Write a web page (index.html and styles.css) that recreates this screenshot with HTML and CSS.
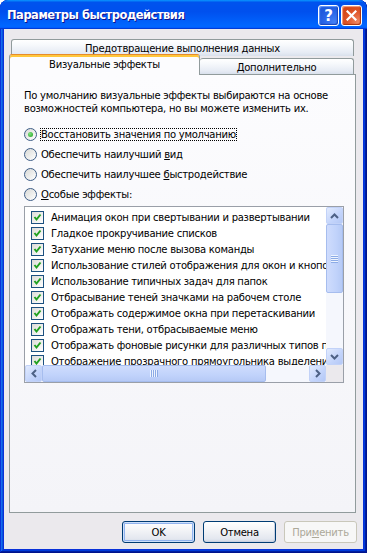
FILE: index.html
```html
<!DOCTYPE html>
<html lang="ru">
<head>
    <meta charset="UTF-8">
    <title>Параметры быстродействия</title>
    <link rel="stylesheet" href="styles.css">
</head>
<body>
    <div class="window">
        <div class="titlebar">
            <span class="title">Параметры быстродействия</span>
            <div class="caption-buttons">
                <div class="cap-btn help">?</div>
                <div class="cap-btn close">
                    <svg width="11" height="11" viewBox="0 0 11 11"><path d="M1.5 1.5 L9.5 9.5 M9.5 1.5 L1.5 9.5" stroke="#fff" stroke-width="2.2" stroke-linecap="square"/></svg>
                </div>
            </div>
        </div>
        <div class="client">
            <div class="tabs">
                <div class="tab-row back">
                    <div class="tab wide">Предотвращение выполнения данных</div>
                </div>
                <div class="tab-row front">
                    <div class="tab active">Визуальные эффекты</div>
                    <div class="tab extra">Дополнительно</div>
                </div>
            </div>
            <div class="panel">
                <p class="intro">По умолчанию визуальные эффекты выбираются на основе<br>возможностей компьютера, но вы можете изменить их.</p>
                <div class="options">
                    <div class="option"><span class="radio checked"><span class="dot"></span></span><span class="label focus">Восстановить значения по умолчанию</span></div>
                    <div class="option"><span class="radio"></span><span class="label">Обеспечить наилучший <u>в</u>ид</span></div>
                    <div class="option"><span class="radio"></span><span class="label">Обеспечить наилучшее <u>б</u>ыстродействие</span></div>
                    <div class="option"><span class="radio"></span><span class="label"><u>О</u>собые эффекты:</span></div>
                </div>
                <div class="listbox">
                    <div class="items" id="items"></div>
                    <div class="vscroll">
                        <div class="sb-btn"><svg width="9" height="6" viewBox="0 0 9 6"><path d="M1 5 L4.5 1.5 L8 5" fill="none" stroke="#4d6185" stroke-width="2"/></svg></div>
                        <div class="thumb v"><span class="grip v"></span></div>
                        <div class="track"></div>
                        <div class="sb-btn"><svg width="9" height="6" viewBox="0 0 9 6"><path d="M1 1 L4.5 4.5 L8 1" fill="none" stroke="#4d6185" stroke-width="2"/></svg></div>
                    </div>
                    <div class="hscroll">
                        <div class="sb-btn"><svg width="6" height="9" viewBox="0 0 6 9"><path d="M5 1 L1.5 4.5 L5 8" fill="none" stroke="#4d6185" stroke-width="2"/></svg></div>
                        <div class="thumb h"><span class="grip h"></span></div>
                        <div class="track"></div>
                        <div class="sb-btn"><svg width="6" height="9" viewBox="0 0 6 9"><path d="M1 1 L4.5 4.5 L1 8" fill="none" stroke="#4d6185" stroke-width="2"/></svg></div>
                    </div>
                    <div class="corner"></div>
                </div>
            </div>
            <div class="buttons">
                <button type="button" class="btn default">OK</button>
                <button type="button" class="btn">Отмена</button>
                <button type="button" class="btn" disabled>При<u>м</u>енить</button>
            </div>
        </div>
    </div>
    <script>
        const effects = [
            "Анимация окон при свертывании и развертывании",
            "Гладкое прокручивание списков",
            "Затухание меню после вызова команды",
            "Использование стилей отображения для окон и кнопок",
            "Использование типичных задач для папок",
            "Отбрасывание теней значками на рабочем столе",
            "Отображать содержимое окна при перетаскивании",
            "Отображать тени, отбрасываемые меню",
            "Отображать фоновые рисунки для различных типов папок",
            "Отображение прозрачного прямоугольника выделения"
        ];

        const list = document.getElementById("items");
        effects.forEach(text => {
            const row = document.createElement("div");
            row.className = "item";
            row.innerHTML = '<span class="check"><svg width="11" height="11" viewBox="0 0 11 11"><path d="M2.5 5 L4.5 7.5 L8.5 2.5" fill="none" stroke="#21a121" stroke-width="2"/></svg></span><span>' + text + '</span>';
            list.appendChild(row);
        });
    </script>
</body>
</html>
```

FILE: styles.css
```css
*{
    margin: 0;
    padding: 0;
    box-sizing: border-box;
}
body{
    background: #fff;
    font-family: "DejaVu Sans", sans-serif;
    font-size: 10px;
    letter-spacing: -0.25px;
    color: #000;
}

.window{
    width: 367px;
    height: 553px;
    display: flex;
    flex-direction: column;
    padding: 0 4px 4px;
    background: #0831d9;
    border-radius: 8px 8px 0 0;
    overflow: hidden;
    box-shadow: inset -1px -1px #00138c, inset 1px 1px #0831d9,
                inset -2px -2px #001ea0, inset 2px 2px #166aee,
                inset -3px -3px #003bda, inset 3px 3px #0855dd;
}
.titlebar{
    height: 29px;
    margin: 0 -4px;
    padding: 0 5px 0 7px;
    display: flex;
    align-items: center;
    justify-content: space-between;
    border-radius: 8px 8px 0 0;
    background: linear-gradient(180deg, #0997ff, #0053ee 8%, #0050ee 40%, #06f 88%, #06f 93%, #005bff 95%, #003dd7 96%, #003dd7);
}
.title{
    color: #fff;
    font-weight: bold;
    font-size: 11.5px;
    letter-spacing: -0.5px;
    text-shadow: 1px 1px #0f1089;
    padding-top: 1px;
}
.caption-buttons{
    display: flex;
    gap: 2px;
    padding-top: 2px;
}
.cap-btn{
    width: 21px;
    height: 21px;
    border: 1px solid #fff;
    border-radius: 3px;
    display: flex;
    align-items: center;
    justify-content: center;
}
.help{
    color: #fff;
    font-weight: bold;
    font-size: 15px;
    letter-spacing: 0;
    background: radial-gradient(circle at 80% 85%, #4580f5, #2a66e8 45%, #1f5bdd 70%);
    box-shadow: inset -1px -1px 1px #1b44b8, inset 1px 1px 1px #6a9af8;
}
.close{
    background: radial-gradient(circle at 85% 85%, #f08a65, #e0572b 45%, #d44718 75%);
    box-shadow: inset -1px -1px 1px #a8330d, inset 1px 1px 1px #f4a488;
}

.client{
    flex: 1;
    background: #ebe9ed;
    display: flex;
    flex-direction: column;
    padding: 10px 7px 0 5px;
}

/* tabs */
.tabs{
    display: flex;
    flex-direction: column;
}
.tab-row{
    display: flex;
}
.tab-row.back{
    margin: 0 2px;
}
.tab-row.front{
    margin-top: -2px;
    height: 20px;
    align-items: flex-end;
}
.tab{
    border: 1px solid #919b9c;
    border-bottom: none;
    border-radius: 3px 3px 0 0;
    background: linear-gradient(180deg, #fff, #f7f9fc 30%, #e6ebf4 80%, #d9e0ec);
    display: flex;
    align-items: center;
    justify-content: center;
    white-space: nowrap;
}
.tab.wide{
    flex: 1;
    height: 17px;
}
.tab.active{
    position: relative;
    z-index: 1;
    width: 191px;
    height: 21px;
    margin-bottom: -1px;
    padding-bottom: 2px;
    background: #fcfcfe;
    border-top: 1px solid #e68b2c;
    box-shadow: inset 0 2px #ffc73c;
}
.tab.extra{
    width: 154px;
    height: 16px;
    padding-top: 1px;
    border-left: none;
}

.panel{
    height: 439px;
    border: 1px solid #919b9c;
    background: linear-gradient(180deg, #fcfcfe, #f4f4f8);
    padding: 14px 0 0 14px;
}
.intro{
    line-height: 13px;
    white-space: nowrap;
}
.options{
    margin-top: 9px;
}
.option{
    height: 20px;
    display: flex;
    align-items: center;
    gap: 3px;
}
.radio{
    width: 13px;
    height: 13px;
    border: 1px solid #3d5d86;
    border-radius: 50%;
    background: linear-gradient(135deg, #d8d9d6, #fff);
    display: flex;
    align-items: center;
    justify-content: center;
}
.dot{
    width: 5px;
    height: 5px;
    border-radius: 50%;
    background: radial-gradient(circle at 35% 35%, #7fe27f, #21a121);
}
.label{
    padding: 1px 1px;
    white-space: nowrap;
}
.label.focus{
    outline: 1px dotted #000;
    outline-offset: -1px;
}

/* list */
.listbox{
    margin-top: 2px;
    width: 320px;
    height: 177px;
    border: 1px solid #9a9fa8;
    background: #fff;
    display: grid;
    grid-template-columns: 301px 17px;
    grid-template-rows: 158px 17px;
}
.items{
    overflow: hidden;
    padding: 2px 0 0 6px;
}
.item{
    height: 16px;
    display: flex;
    align-items: center;
    gap: 7px;
    white-space: nowrap;
}
.check{
    flex: none;
    width: 13px;
    height: 13px;
    border: 1px solid #1c5180;
    background: linear-gradient(135deg, #dcdcd7, #fff);
    display: flex;
    align-items: center;
    justify-content: center;
}

.vscroll, .hscroll{
    display: flex;
    background: #f5f7fd;
}
.vscroll{
    flex-direction: column;
}
.track{
    flex: 1;
}
.sb-btn{
    flex: none;
    width: 17px;
    height: 17px;
    border: 1px solid #c2d2f8;
    border-radius: 2px;
    background: linear-gradient(135deg, #e2ebfe, #c3d4fb 60%, #b4c8f6);
    display: flex;
    align-items: center;
    justify-content: center;
}
.thumb{
    flex: none;
    border: 1px solid #a6bdee;
    border-radius: 2px;
    display: flex;
    align-items: center;
    justify-content: center;
}
.thumb.v{
    height: 69px;
    background: linear-gradient(90deg, #cfdcfd, #c1d3fb 60%, #b6caf6);
}
.thumb.h{
    width: 224px;
    background: linear-gradient(180deg, #cfdcfd, #c1d3fb 60%, #b6caf6);
}
.grip.v{
    width: 7px;
    height: 8px;
    background: repeating-linear-gradient(180deg, #eef4fe 0 1px, #8cabe6 1px 2px);
}
.grip.h{
    width: 8px;
    height: 7px;
    background: repeating-linear-gradient(90deg, #eef4fe 0 1px, #8cabe6 1px 2px);
}
.corner{
    background: #ebe9ed;
}

/* dialog buttons */
.buttons{
    display: flex;
    justify-content: flex-end;
    gap: 8px;
    margin: 8px -1px 0 0;
}
.btn{
    width: 73px;
    height: 22px;
    font-family: "DejaVu Sans", sans-serif;
    font-size: 10px;
    letter-spacing: -0.25px;
    color: #000;
    border: 1px solid #003c74;
    border-radius: 3px;
    background: linear-gradient(180deg, #fff, #f3f4f7 40%, #e3e7ef 85%, #cdd4e2);
    box-shadow: inset -1px -1px #c9d1e2;
}
.btn.default{
    box-shadow: inset 0 0 0 1px #cee0fb, inset 0 0 0 2px #91b3ef;
}
.btn:disabled{
    color: #aca899;
    border-color: #c9c7ba;
    background: #f7f7f7;
    box-shadow: none;
}
```
